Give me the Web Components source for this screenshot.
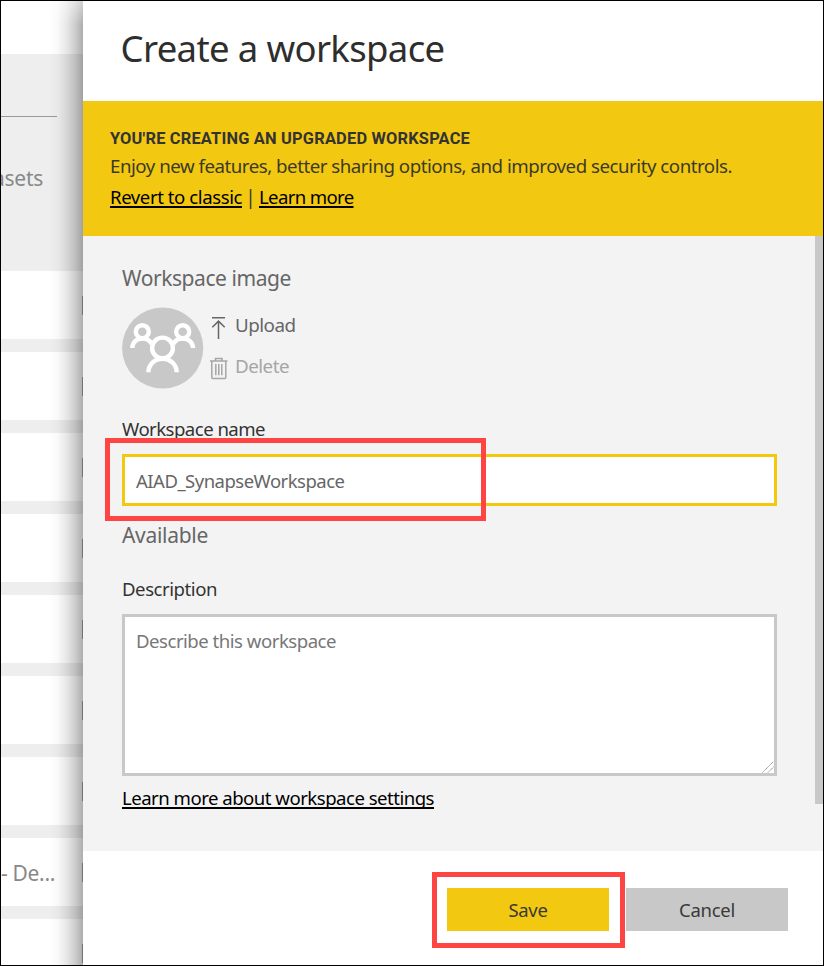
<!DOCTYPE html>
<html lang="en"><head><meta charset="utf-8"><title>Create a workspace</title>
<style>html,body{margin:0;height:966px;overflow:hidden;background:#fff;font-family:"Noto Sans","Open Sans",sans-serif;font-size:19px;line-height:24px;color:#333}</style></head>
<body><workspace-app></workspace-app>
<script>
const define=(name,html)=>customElements.define(name,class extends HTMLElement{
  constructor(){super();this.attachShadow({mode:'open'}).innerHTML=html;}
});

/* One line of text whose tracking is adjusted to fill the given width. */
customElements.define('text-line',class extends HTMLElement{
  constructor(){super();this.attachShadow({mode:'open'}).innerHTML='<style>:host{display:block;white-space:nowrap;height:24px;line-height:24px}span{display:inline-block}:host([link]) span{text-decoration:underline;text-decoration-thickness:1.5px;text-underline-offset:2px;text-decoration-skip-ink:none;color:#000}</style><span><slot></slot></span>';}
  connectedCallback(){
    const s=this.shadowRoot.querySelector('span'),w=+this.getAttribute('width');
    if(this.hasAttribute('size'))this.style.fontSize=this.getAttribute('size')+'px';
    const natural=s.getBoundingClientRect().width,n=this.textContent.length;
    s.style.letterSpacing=((w-natural)/n).toFixed(3)+'px';
  }
});

define('list-row',`<style>:host{display:block;box-sizing:border-box;height:81px;border-bottom:13px solid #eee;background:linear-gradient(#a8a8a8,#a8a8a8) 81px 25px/2px 19px no-repeat #fff;padding-top:23px;color:#888}</style><slot></slot>`);

define('background-list',`<style>
:host{display:block;width:82px;height:964px;overflow:hidden;position:relative;background:#fff}
.top{height:53px}
.filter{height:217px;background:#eee;color:#888;box-sizing:border-box;padding-top:62px}
.rule{width:56px;height:1px;background:#999;margin-bottom:49px}
.tab{margin-left:-8px}
.shade{position:absolute;inset:0 0 0 auto;width:34px;background:linear-gradient(90deg,rgba(0,0,0,0),rgba(0,0,0,.025) 25%,rgba(0,0,0,.09) 50%,rgba(0,0,0,.19) 75%,rgba(0,0,0,.32))}
.shade::before{content:"";position:absolute;inset:0 0 auto 0;height:24px;background:linear-gradient(rgba(255,255,255,.45),transparent)}
</style><div class="top"></div><div class="filter"><div class="rule"></div><div class="tab"><text-line size="21" width="50">asets</text-line></div></div>
<list-row></list-row><list-row></list-row><list-row></list-row><list-row></list-row><list-row></list-row><list-row></list-row><list-row></list-row><list-row><text-line size="21" width="54">- De...</text-line></list-row><list-row></list-row>
<div class="shade"></div>`);

define('upgrade-banner',`<style>:host{display:block;box-sizing:border-box;height:135px;background:#f2c811;padding:26px 0 0 27px;color:#3b3a28}
.h{font:bold 16.4px/24px Roboto,sans-serif;color:#333;margin-bottom:3px}.links{display:flex;margin-top:7px}.bar{width:17px;text-align:center}</style>
<div class="h"><text-line size="16.4" width="360">YOU'RE CREATING AN UPGRADED WORKSPACE</text-line></div>
<text-line size="18.7" width="622">Enjoy new features, better sharing options, and improved security controls.</text-line>
<div class="links"><text-line link size="18.6" width="132">Revert to classic</text-line><span class="bar">|</span><text-line link size="18.6" width="94.5">Learn more</text-line></div>`);

define('workspace-image',`<style>:host{display:block}.row{display:flex;height:82px;margin-top:17px}
.actions{padding-left:5px}.a{display:flex;height:41px;color:#666}.a.off{color:#a6a6a6}.a svg{margin-top:8px;margin-right:6px}.a text-line{margin-top:6px}</style>
<text-line size="21" width="169">Workspace image</text-line>
<div class="row"><svg width="82" height="82" viewBox="0 0 82 82"><circle cx="40.7" cy="41" r="40.6" fill="#c8c8c8"/>
<g fill="none" stroke="#fff" stroke-width="4.4"><circle cx="20.3" cy="24.7" r="6.5"/><circle cx="60.7" cy="24.7" r="6.5"/><circle cx="40.5" cy="41" r="10.4"/><path d="M10.3 41c0-5.5 4.5-9.5 10-9.5 4.2 0 7.8 2.1 9.4 5.5M71 41c0-5.5-4.7-9.5-10.3-9.5-4.2 0-7.8 2.1-9.4 5.5M26.4 65.3c0-7.6 6.2-13.6 14.1-13.6s14.2 6 14.2 13.6"/></g></svg>
<div class="actions"><div class="a"><svg width="20" height="26" viewBox="0 0 20 26" fill="none" stroke="#666" stroke-width="1.5"><path d="M3 2.7h13M9.5 6v18M3.3 12.3l6.2-6.2 6.2 6.2"/></svg><text-line size="18.8" width="60.5">Upload</text-line></div>
<div class="a off"><svg width="20" height="26" viewBox="0 0 20 26" fill="none" stroke="#a6a6a6" stroke-width="1.5"><path d="M1 5h17.5M6.5 5V2.5h6.5V5M2.8 5v16.4q0 1 1 1h12q1 0 1-1V5M6.8 8v11.3M9.8 8v11.3M12.8 8v11.3"/></svg><text-line size="18.8" width="54">Delete</text-line></div></div></div>`);

define('input-box',`<style>:host{display:block;box-sizing:border-box;width:655px;height:52px;border:3px solid #f2c811;background:#fff;padding:12px 11px 0;color:#666;position:relative}
:host([multiline]){height:162px;border-color:#c8c8c8;color:#777}:host([multiline]) svg{display:block}svg{display:none;position:absolute;right:0;bottom:0}</style><slot></slot><svg width="12" height="12" viewBox="0 0 12 12" stroke="#888" stroke-width="1" stroke-dasharray="1.2 .5"><path d="M.5 11.5l11-11M6 11.5L11.5 6"/></svg>`);

define('workspace-form',`<style>:host{display:block;box-sizing:border-box;height:615px;background:#f3f3f3;padding:30px 0 0 39px;color:#333;position:relative}
.gray{color:#666}.name{margin:28px 0 13px;height:24px}.avail{margin-top:17px}.desc{margin:30px 0 13px}.more{margin-top:10px}
.thumb{position:absolute;right:0;top:0;width:8px;height:567.5px;background:#c8c8c8}</style>
<workspace-image class="gray"></workspace-image>
<div class="name"><text-line size="18.6" width="143">Workspace name</text-line></div>
<input-box><text-line size="18.5" width="208.5">AIAD_SynapseWorkspace</text-line></input-box>
<div class="avail gray"><text-line size="21" width="86">Available</text-line></div>
<div class="desc"><text-line size="18.6" width="95">Description</text-line></div>
<input-box multiline><text-line size="18.6" width="200">Describe this workspace</text-line></input-box>
<div class="more"><text-line link size="18.6" width="312">Learn more about workspace settings</text-line></div><div class="thumb"></div>`);

define('action-button',`<style>:host{display:flex;justify-content:center;box-sizing:border-box;width:162px;height:43px;padding-top:10px;background:#c8c8c8;color:#3a3a3a}:host([primary]){background:#f2c811}</style><slot></slot>`);

define('side-panel',`<style>:host{display:block;width:740px;height:964px;background:#fff}.head{box-sizing:border-box;height:100px;padding:35px 0 0 37.5px;color:#2e2e2e}.foot{display:flex;gap:17px;padding:37px 0 0 364px}</style>
<div class="head"><text-line size="36.5" width="324">Create a workspace</text-line></div><upgrade-banner></upgrade-banner><workspace-form></workspace-form>
<div class="foot"><action-button primary><text-line size="18.5" width="39">Save</text-line></action-button><action-button><text-line size="18.5" width="56">Cancel</text-line></action-button></div>`);

define('highlight-box',`<style>:host{display:block;position:absolute;box-sizing:border-box;border:5px solid #f44}</style>`);

define('workspace-app',`<style>:host{display:flex;box-sizing:border-box;width:824px;height:966px;border:1px solid #000;position:relative;overflow:hidden}
.n{left:104px;top:437px;width:381px;height:83px}.s{left:431px;top:871px;width:193px;height:76px}</style>
<background-list></background-list><side-panel></side-panel><highlight-box class="n"></highlight-box><highlight-box class="s"></highlight-box>`);
</script></body></html>
